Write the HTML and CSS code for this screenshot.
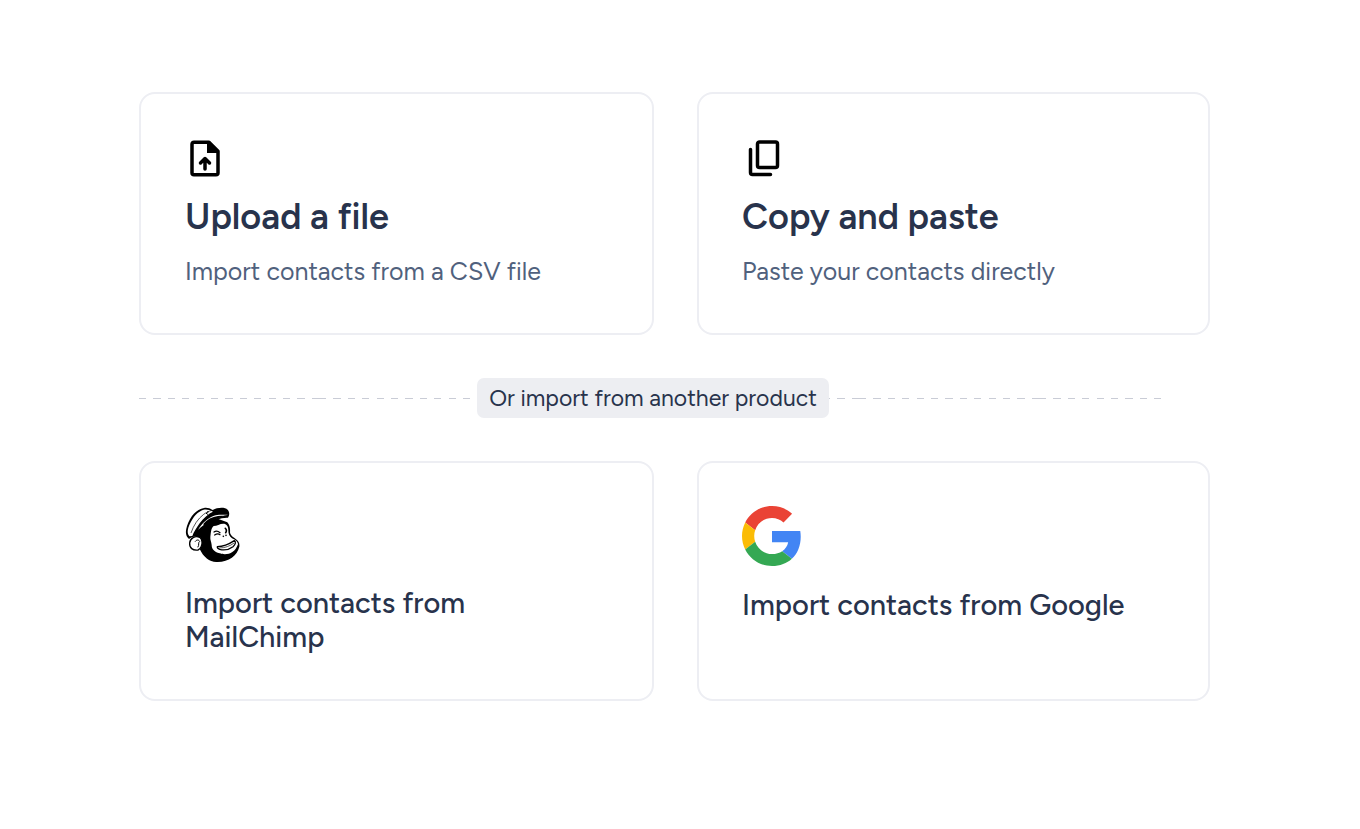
FILE: index.html
```html
<!DOCTYPE html>
<html lang="en">
<head>
<meta charset="utf-8">
<meta name="viewport" content="width=device-width, initial-scale=1">
<title>Import contacts</title>
<link rel="stylesheet" href="styles.css">
</head>
<body>
<main class="import">
  <div class="row row-main">
    <a class="card" href="#upload">
      <svg class="icon" viewBox="-1 -1 40 40" aria-hidden="true">
        <path d="M8 2.200H23L32 11.200V32.800Q32 34.800 30 34.800H8Q6 34.800 6 32.800V4.200Q6 2.200 8 2.200Z" fill="none" stroke="#000" stroke-width="3.500" stroke-linejoin="round"/>
        <path d="M21 2h3l8 8v3H21z"/>
        <path d="M19 29V19M14.500 23l4.500-4.500 4.500 4.500" fill="none" stroke="#000" stroke-width="3.500" stroke-linecap="round" stroke-linejoin="round"/>
      </svg>
      <h2 class="title">Upload a file</h2>
      <p class="text">Import contacts from a CSV file</p>
    </a>
    <a class="card" href="#paste">
      <svg class="icon" viewBox="-1 -1 40 40" aria-hidden="true">
        <rect x="14.500" y="2" width="20" height="25.500" rx="2" fill="none" stroke="#000" stroke-width="3.500"/>
        <path d="M7.500 9.500V32.500Q7.500 34.500 9.500 34.500H27.500" fill="none" stroke="#000" stroke-width="3.500" stroke-linecap="round"/>
      </svg>
      <h2 class="title">Copy and paste</h2>
      <p class="text">Paste your contacts directly</p>
    </a>
  </div>

  <div class="divider"><span class="pill">Or import from another product</span></div>

  <div class="row row-products">
    <a class="card" href="#mailchimp">
      <svg class="logo logo-chimp" viewBox="28 31 168 168" aria-hidden="true">
        <path d="M72 98C62 112 62 140 72 160C84 186 104 200 126 199C160 198 184 180 191 153C192 144 190 139 184 133C174 125 164 121 163 110C164 98 162 88 155 80L118 66Z"/>
        <path d="M114 91C124 91 132 84 143 84C152 84 158 91 158 103C158 115 161 122 168 127C178 132 187 138 187 146C183 156 179 164 170 169C160 177 142 177 132 173C115 168 108 160 108 148C107 138 103 132 104 124C106 113 105 98 114 91Z" fill="#fff"/>
        <path d="M40 130C30 121 28 109 34 91C44 61 62 42 85 37C94 35 102 38 111 43C125 35 147 33 156 42C163 50 161 60 157 66C135 65 114 75 96 90C82 101 74 114 66 125C60 120 48 123 40 130Z"/>
        <path d="M41 122C33 113 36 99 42 86C52 63 67 47 84 42C93 40 102 43 112 48C99 54 84 66 72 83C62 97 54 110 50 121Z" fill="#fff"/>
        <path d="M46 112C54 88 67 69 84 56C92 50 99 47 106 45" fill="none" stroke="#000" stroke-width="2"/>
        <path d="M67 103C79 82 96 67 115 60C131 55 145 59 157 57C139 63 119 66 101 77C85 86 76 95 67 103Z" fill="#fff"/>
        <path d="M82 86C94 71 109 63 127 61C140 59 149 61 155 59C137 66 119 68 103 79L90 90Z"/>
        <path d="M91 52L96 57M97 46L96 53" fill="none" stroke="#000" stroke-width="3"/>
        <path d="M72 125C59 119 43 127 42 142C41 157 51 165 67 163C76 160 80 147 79 138C78 131 76 128 72 125Z" fill="#fff" stroke="#000" stroke-width="4"/>
        <path d="M59 137C64 130 71 133 72 138C66 141 72 147 67 154" fill="none" stroke="#000" stroke-width="3" stroke-linecap="round"/>
        <path d="M115 109C121 105 127 106 133 111M117 118C123 114 129 114 133 117" fill="none" stroke="#000" stroke-width="4" stroke-linecap="round"/>
        <path d="M149 98C153 101 153 107 150 111" fill="none" stroke="#000" stroke-width="5" stroke-linecap="round"/>
        <circle cx="143" cy="122" r="2.500"/><circle cx="151" cy="119" r="2.500"/>
        <path d="M125 153C145 153 161 145 176 135C182 139 179 147 172 153C160 162 144 164 132 161C127 159 124 157 125 153Z" fill="#fff" stroke="#000" stroke-width="4" stroke-linejoin="round"/>
        <path d="M132 157C148 157 163 151 174 143" fill="none" stroke="#000" stroke-width="2" stroke-linecap="round"/>
      </svg>
      <h2 class="product">Import contacts from<br>MailChimp</h2>
    </a>
    <a class="card" href="#google">
      <svg class="logo logo-google" viewBox="0 0 48 48" aria-hidden="true">
        <path fill="#ea4335" d="M24 9.500c3.540 0 6.710 1.220 9.210 3.600l6.850-6.850C35.900 2.380 30.470 0 24 0 14.620 0 6.510 5.380 2.560 13.220l7.980 6.190C12.430 13.720 17.740 9.500 24 9.500z"/>
        <path fill="#4285f4" d="M46.980 24.550c0-1.570-.15-3.090-.38-4.550H24v9.020h12.940c-.58 2.960-2.260 5.480-4.780 7.180l7.730 6c4.510-4.180 7.090-10.360 7.090-17.650z"/>
        <path fill="#fbbc05" d="M10.530 28.590c-.48-1.450-.76-2.990-.76-4.590s.27-3.140.76-4.590l-7.980-6.190C.92 16.460 0 20.120 0 24c0 3.880.92 7.540 2.560 10.780l7.970-6.190z"/>
        <path fill="#34a853" d="M24 48c6.480 0 11.930-2.130 15.890-5.810l-7.730-6c-2.150 1.450-4.920 2.300-8.160 2.300-6.260 0-11.570-4.220-13.470-9.910l-7.980 6.190C6.510 42.620 14.620 48 24 48z"/>
      </svg>
      <h2 class="product">Import contacts from Google</h2>
    </a>
  </div>
</main>
</body>
</html>
```
FILE: styles.css
```css
* { box-sizing: border-box; }

body {
  margin: 0;
  background: #fff;
  color: #28334c;
  font-family: Figtree, Lato, "Open Sans", sans-serif;
}

.import {
  display: flex;
  flex-direction: column;
  gap: 43px;
  padding: 92px 150px 92px 139px;
}

.row {
  display: grid;
  grid-template-columns: 515fr 513fr;
  gap: 43px;
}

.row-main { min-height: 243px; }
.row-products { min-height: 240px; }

.card {
  display: flex;
  flex-direction: column;
  align-items: flex-start;
  padding: 43px 44px;
  border: 2px solid #edeef3;
  border-radius: 16px;
  color: inherit;
  text-decoration: none;
}

.card + .card { padding-left: 43px; }

.icon {
  width: 40px;
  height: 40px;
  margin-top: 2px;
}

.title {
  margin: 16px 0 0;
  font-size: 36px;
  line-height: 44px;
  font-weight: 600;
}

.text {
  margin: 16px 0 0;
  color: #50617d;
  font-size: 25px;
  line-height: 32px;
}

.divider {
  display: flex;
  justify-content: center;
  margin-right: 43px;
  background: repeating-linear-gradient(to right, #c9ccd6 0 4%, transparent 4% 8%) left center / 180px 1px repeat-x;
}

.pill {
  padding: 6px 12px;
  border-radius: 7px;
  background: #edeef2;
  font-size: 23px;
  line-height: 28px;
}

.logo-chimp {
  width: 56px;
  height: 56px;
}

.logo-google {
  width: 60px;
  height: 60px;
}

.product {
  margin: 22px 0 0;
  font-size: 29px;
  line-height: 34px;
  font-weight: 500;
}

.logo-chimp + .product { margin-top: 24px; }
```
